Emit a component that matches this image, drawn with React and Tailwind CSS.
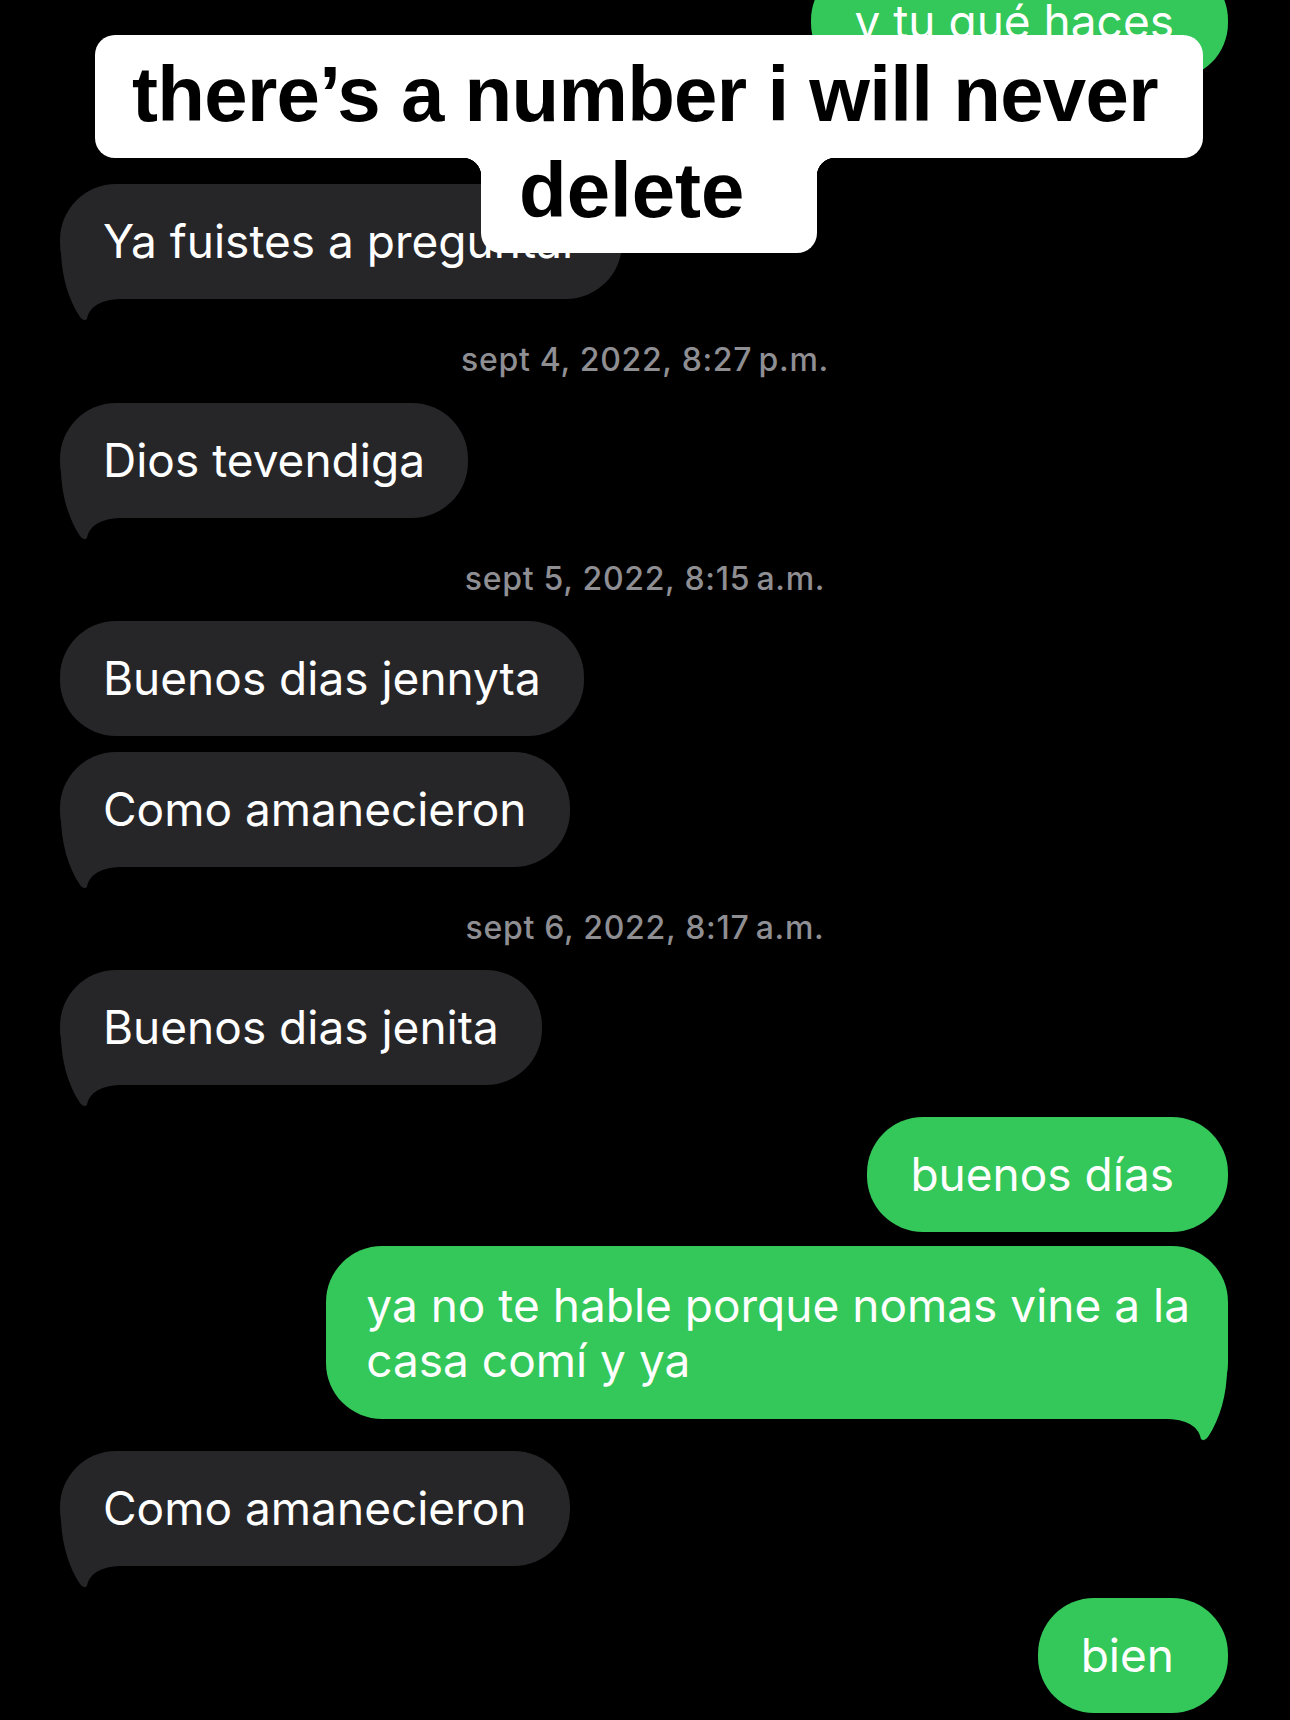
import React from "react";

function Tail({ color, right }) {
  return (
    <svg
      width="70"
      height="75"
      viewBox="0 0 70 75"
      className={
        "absolute bottom-[-25px] " + (right ? "right-0 -scale-x-100" : "left-0")
      }
    >
      <path
        d="M1 0 C1 25 8 50 20 68 Q24 73 27 70 C29 60 37 51 60 50 L70 50 L70 0 Z"
        fill={color}
      />
    </svg>
  );
}

function Dark({ children, tail, className = "" }) {
  return (
    <div className={"self-start ml-[60px] " + className}>
      <div className="relative rounded-[56px] bg-[#262629] px-[43px] py-[30px] text-[46px] leading-[55px] text-white whitespace-nowrap">
        {tail && <Tail color="#262629" />}
        <span className="relative">{children}</span>
      </div>
    </div>
  );
}

function Green({ children, tail, className = "", inner = "py-[30px] pl-[43px] pr-[54px]" }) {
  return (
    <div className={"self-end mr-[62px] " + className}>
      <div
        className={
          "relative rounded-[56px] bg-[#34c759] text-[46px] leading-[55px] text-white whitespace-nowrap " +
          inner
        }
      >
        {tail && <Tail color="#34c759" right />}
        <span className="relative">{children}</span>
      </div>
    </div>
  );
}

function Stamp({ children }) {
  return (
    <div className="mt-[42px] text-center text-[32px] leading-[38px] tracking-[0.7px] font-medium text-[#8e8e93]">
      {children}
    </div>
  );
}

export default function App() {
  return (
    <div className="relative w-[1290px] h-[1720px] overflow-hidden bg-black font-['Inter','Noto_Sans',sans-serif]">
      <div className="flex flex-col -mt-[36px]">
        <Green>y tu qué haces</Green>
        <Dark tail className="mt-[105px]">
          Ya fuistes a preguntar
        </Dark>
        <Stamp>{"sept 4, 2022, 8:27\u202Fp.m."}</Stamp>
        <Dark tail className="mt-[24px]">
          Dios tevendiga
        </Dark>
        <Stamp>{"sept 5, 2022, 8:15\u202Fa.m."}</Stamp>
        <Dark className="mt-[23px]">Buenos dias jennyta</Dark>
        <Dark tail className="mt-[16px]">
          Como amanecieron
        </Dark>
        <Stamp>{"sept 6, 2022, 8:17\u202Fa.m."}</Stamp>
        <Dark tail className="mt-[23px]">
          Buenos dias jenita
        </Dark>
        <Green className="mt-[32px]">buenos días</Green>
        <Green tail className="mt-[14px]" inner="py-[31.5px] pl-[40px] pr-[38px]">
          ya no te hable porque nomas vine a la
          <br />
          casa comí y ya
        </Green>
        <Dark tail className="mt-[32px]">
          Como amanecieron
        </Dark>
        <Green className="mt-[32px]">bien</Green>
      </div>

      <div className="absolute left-0 right-0 top-[35px] flex flex-col items-center pl-[8px] font-['Liberation_Sans',Arial,sans-serif] font-bold text-black">
        <div className="w-[1108px] h-[123px] rounded-[20px] bg-white pl-[37px] pt-[12px] text-left text-[78px] leading-[95px] tracking-[-0.7px] whitespace-nowrap">
          there’s a number i will never
        </div>
        <div className="relative w-[336px] h-[95px] rounded-b-[20px] bg-white pl-[38px] text-left text-[78px] leading-[64px] tracking-[0px]">
          <div className="absolute left-[-18px] top-0 h-[18px] w-[18px] bg-[radial-gradient(circle_at_0_100%,transparent_18px,white_18.5px)]" />
          <div className="absolute right-[-18px] top-0 h-[18px] w-[18px] bg-[radial-gradient(circle_at_100%_100%,transparent_18px,white_18.5px)]" />
          <span className="relative">delete</span>
        </div>
      </div>
    </div>
  );
}
